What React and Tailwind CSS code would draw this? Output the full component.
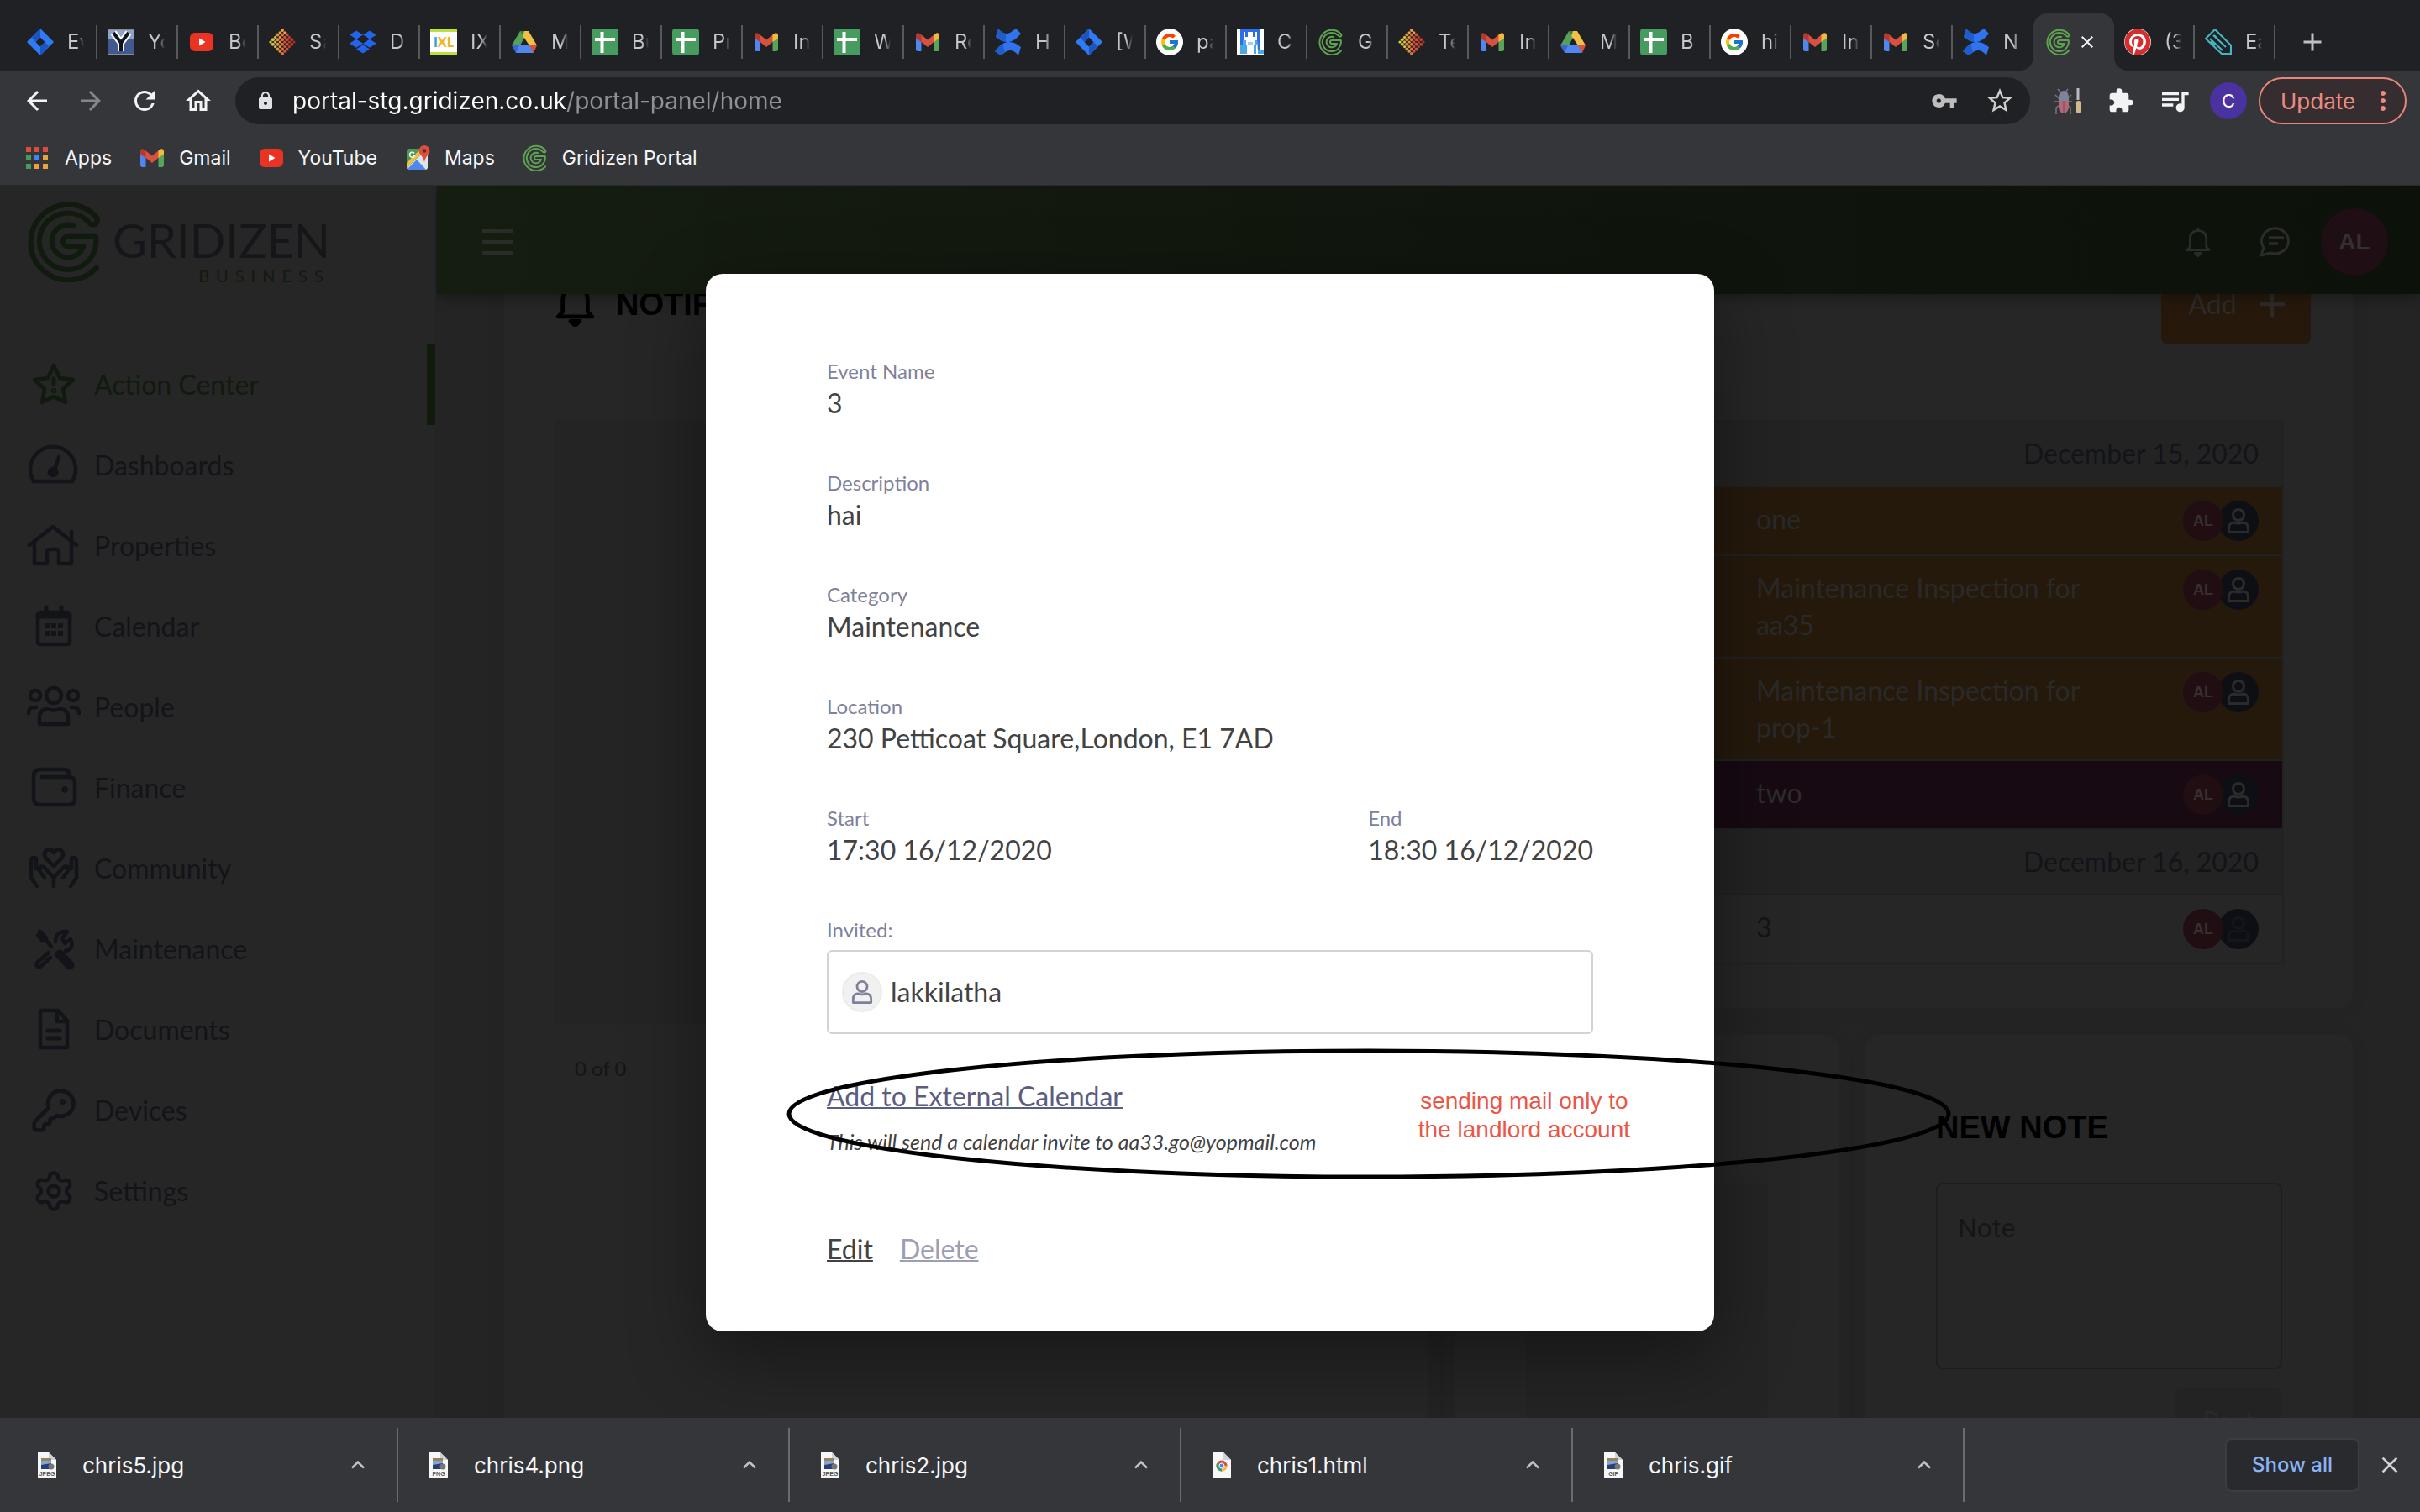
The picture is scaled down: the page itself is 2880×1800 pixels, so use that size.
import React from "react";
import {
  MdArrowBack, MdArrowForward, MdRefresh, MdOutlineHome, MdLock, MdVpnKey, MdStarBorder,
  MdExtension, MdQueueMusic, MdClose, MdAdd, MdMoreVert, MdKeyboardArrowUp,
} from "react-icons/md";
import { FaDropbox, FaPinterest } from "react-icons/fa";
import { FcGoogle } from "react-icons/fc";
import { FileText, KeyRound, Settings } from "lucide-react";

/* ---------- brand marks ---------- */

function GridizenMark({ className, width = 6 }) {
  return (
    <svg viewBox="0 0 90 96" className={className} fill="none" stroke="currentColor" strokeWidth={width} strokeLinecap="round" strokeLinejoin="round">
      <path d="M54 30A19 19 0 1 0 66 54H48a6 6 0 0 1 0-12H80A33 33 0 1 1 70 24Q76 32 81 27Q84 23 79 18A44 44 0 1 0 81 79" />
    </svg>
  );
}

function Jira() {
  return (
    <svg viewBox="0 0 32 32" className="size-8">
      <path fill="#2f7bf6" fillRule="evenodd" d="M16 0 32 16 16 32 0 16ZM16 10.5 10.5 16 16 21.500 21.500 16Z" />
      <path fill="#1d55c0" d="M16 0v10.500L10.500 16 6 11Z" />
      <path fill="#1d55c0" d="M16 32V21.500L21.500 16 26 21Z" />
    </svg>
  );
}

function Yammer() {
  return (
    <svg viewBox="0 0 32 32" className="size-8">
      <rect width="32" height="32" fill="#8a8a8a" />
      <rect y="2" width="32" height="28" fill="#41598f" />
      <rect y="2" width="32" height="10" fill="#8fa3c6" />
      <path d="M7 5 16 17V27M25 5 16 17" stroke="#fff" strokeWidth="8" fill="none" />
      <path d="M7 5 16 17V27M25 5 16 17" stroke="#10131f" strokeWidth="4" fill="none" />
    </svg>
  );
}

function YouTube() {
  return (
    <svg viewBox="0 0 32 32" className="size-8">
      <rect x="2" y="5" width="28" height="22" rx="6" fill="#ea3323" />
      <path d="M13 11.500 20.500 16 13 20.500Z" fill="#fff" />
    </svg>
  );
}

const dotColors = ["#d9d04a", "#d9c04a", "#e0963a", "#e2743a", "#d4503a", "#c23c2c", "#a52f26"];
const dots = [];
for (let r = 0; r < 6; r++) {
  for (let c = 0; c < 6; c++) {
    dots.push([r, c, dotColors[Math.round((c - r + 5) * 0.6)]]);
  }
}
function DotDiamond() {
  return (
    <svg viewBox="0 0 32 32" className="size-8">
      {dots.map(([r, c, f]) => (
        <circle key={r + "-" + c} cx={16 + (c - r) * 2.8} cy={2 + (c + r) * 2.8} r={(r + c) % 2 ? 1.6 : 2} fill={r + c < 2 ? "#f0a04a" : f} />
      ))}
    </svg>
  );
}

function Ixl() {
  return (
    <span className="flex size-8 flex-col justify-center border-y-4 border-[#b9e33c] bg-white text-center font-['Lato'] text-[16px] leading-6 font-black text-[#efb32b]">
      <span><span className="text-[#3aa0d8]">I</span>XL</span>
    </span>
  );
}

function Drive() {
  return (
    <svg viewBox="0 0 32 32" className="size-8">
      <path fill="#56a05a" d="M11 3h5l4 7L7 29 1 20Z" />
      <path fill="#3c7c40" d="M11 3h10l-5 8Z" />
      <path fill="#f2c042" d="M16 3h5l10 17H22L14 9Z" />
      <path fill="#4f87ee" d="M8 20h15l4 9H6Z" />
      <path fill="#3c66cf" d="M1 20h9l-4 9Z" />
      <path fill="#d8503f" d="M22 20h9l-4 9Z" />
      <path fill="#202124" d="m16 11 5 9H11Z" />
    </svg>
  );
}

function Sheets() {
  return (
    <svg viewBox="0 0 32 32" className="size-8">
      <rect width="32" height="32" rx="4" fill="#469b5f" />
      <path d="M12.500 4v25M4 13h24" stroke="#fff" strokeWidth="4" />
    </svg>
  );
}

function Gmail() {
  return (
    <svg viewBox="0 0 32 32" className="size-8">
      <path fill="#4f87ee" d="M2 9h6.500v18H4.500A2.500 2.500 0 0 1 2 24.500Z" />
      <path fill="#56a55a" d="M23.500 9H30v15.500A2.500 2.500 0 0 1 27.500 27h-4Z" />
      <path fill="#d8503f" d="m8 7 8 6.500L24 7v8.500L16 22l-8-6.500Z" />
      <path fill="#f2b93c" d="M23.500 7.500 26 5.700c2-1.200 4 .3 4 2.300v3.500l-6.500 4.500Z" />
      <path fill="#b8382b" d="M8.500 7.500 6 5.700C4 4.500 2 6 2 8v3.500l6.500 4.500Z" />
    </svg>
  );
}

function Confluence() {
  return (
    <svg viewBox="0 0 32 32" className="size-8">
      <path fill="#2f74ee" d="M4 0c5 6 9 7 14 5l7-5 6 6C24 14 20 16 15 16 9 16 5 13 1 10Z" />
      <path fill="#1f5ccc" d="M4 0c3 4 6 6 9 6v10C9 15 5 13 1 10Z" />
      <path fill="#2f74ee" d="M28 32c-5-6-9-7-14-5l-7 5-7-5C7 18 12 16 17 16c6 0 10 3 14 6Z" />
      <path fill="#1f5ccc" d="M7 32l-7-5c3-4 6-7 9-9l3 10Z" />
    </svg>
  );
}

function Google() {
  return (
    <span className="flex size-8 items-center justify-center rounded-full bg-white">
      <FcGoogle className="size-6" />
    </span>
  );
}

function PixelFigure() {
  return (
    <svg viewBox="0 0 32 32" className="size-8">
      <rect width="32" height="32" fill="#fff" />
      <path fill="#2c6ee8" d="M4 0h24v14h-4V4H8v10H4ZM4 14h3v14H4ZM24 14h4v12h-3Z" />
      <path fill="#4aa8e8" d="M7 14h4v6H7ZM21 14h3v6h-3ZM4 20h4v10H4ZM9 19h3v11H9ZM20 19h3v11h-3ZM25 26h7v4h-7Z" />
      <path fill="#2c6ee8" d="M10 4h3v6h-3ZM19 4h3v6h-3Z" />
      <path fill="#9fd0f2" d="M13 16h6v3h-6Z" />
    </svg>
  );
}

function Clip() {
  return (
    <svg viewBox="0 0 32 32" className="size-8" fill="none" stroke="#48b3bd" strokeWidth="2.200">
      <path d="M12 1 1 12l19 18h11V20L12 1M6 12l15 14M10 8l15 14M15 12l-4-4M12 20 7 15" />
    </svg>
  );
}

function MapsPin() {
  return (
    <svg viewBox="0 0 32 32" className="size-8">
      <rect x="3" y="5" width="25" height="25" rx="3" fill="#4d9a55" />
      <path d="M3 28 24 8l4 4v16l-2 2H5Z" fill="#dfe3e6" />
      <path d="M4 29 15 18l11 12H6Z" fill="#4f87ee" />
      <path d="M3 22 20 5h6L3 28Z" fill="#f2c042" />
      <path d="M24 1a6.500 6.500 0 0 0-6.500 6.500C17.500 12 23 14 24 21c1-7 6.500-9 6.500-13.500A6.500 6.500 0 0 0 24 1Z" fill="#d8503f" />
      <circle cx="24" cy="7.500" r="2.300" fill="#7f1f18" />
      <path d="M12 10.500a3 3 0 1 0 .5 2.500H10" stroke="#fff" strokeWidth="1.500" fill="none" />
    </svg>
  );
}

const appColors = ["#dd4b3e", "#dd4b3e", "#dd4b3e", "#469b5f", "#4285f4", "#e8a33d", "#469b5f", "#e8a33d", "#e8a33d"];
function AppsGrid() {
  return (
    <svg viewBox="0 0 26 26" className="size-[26px]">
      {appColors.map((c, i) => (
        <rect key={i} x={(i % 3) * 10} y={Math.floor(i / 3) * 10} width="6" height="6" fill={c} />
      ))}
    </svg>
  );
}

function Bug() {
  return (
    <svg viewBox="0 0 34 34" className="size-[34px]">
      <path d="M5 3l5 6M17 3l-5 6M2 10l5 5v4M21 10l-5 5v4M1 18h21M3 33V25l4-3M20 33V25l-4-3" stroke="#76787c" strokeWidth="1.500" fill="none" />
      <path d="M6 13a6 8 0 0 1 12 0v4H6Z" fill="#7d8499" />
      <path d="M6 17h12v6c0 6-3 9-6 9s-6-3-6-9Z" fill="#b3687a" />
      <path d="M12 17v15" stroke="#7b4452" />
      <path d="M29 2v14" stroke="#b8bcc2" strokeWidth="3" />
      <rect x="27" y="17" width="5" height="15" rx="2" fill="#cdb98c" />
    </svg>
  );
}

const Mark = () => <GridizenMark className="size-8 text-[#5fa352]" width={6} />;
const Dropbox = () => <FaDropbox className="size-8 text-[#2463eb]" />;
const Pinterest = () => (
  <span className="rounded-full bg-white"><FaPinterest className="size-8 text-[#d32f2f]" /></span>
);

/* ---------- browser frame ---------- */

const tabs = [
  [Jira, "Ev"], [Yammer, "Yo"], [YouTube, "Bo"], [DotDiamond, "Sa"], [Dropbox, "D"], [Ixl, "IX"], [Drive, "M"],
  [Sheets, "Bu"], [Sheets, "Pr"], [Gmail, "In"], [Sheets, "W"], [Gmail, "Re"], [Confluence, "H"], [Jira, "[W"],
  [Google, "pa"], [PixelFigure, "C"], [Mark, "G"], [DotDiamond, "Te"], [Gmail, "In"], [Drive, "M"], [Sheets, "B"],
  [Google, "hi"], [Gmail, "In"], [Gmail, "Sc"], [Confluence, "N"], null, [Pinterest, "(3"], [Clip, "Ea"],
];

function TabStrip() {
  return (
    <div className="flex h-[84px] items-end bg-[#202124] pl-5">
      {tabs.map((tab, i) =>
        tab === null ? (
          <div key={i} className="relative flex h-[68px] w-24 shrink-0 items-center rounded-t-2xl bg-[#35363a] pl-3.5">
            <svg viewBox="0 0 16 16" className="absolute bottom-0 -left-4 size-4"><path d="M16 0v16H0A16 16 0 0 0 16 0Z" fill="#35363a" /></svg>
            <svg viewBox="0 0 16 16" className="absolute -right-4 bottom-0 size-4"><path d="M0 0v16h16A16 16 0 0 1 0 0Z" fill="#35363a" /></svg>
            <Mark />
            <button aria-label="Close tab" className="ml-1.5 text-[#f1f3f4]"><MdClose className="size-6" /></button>
          </div>
        ) : (
          <button key={i} className="flex h-[68px] w-24 shrink-0 items-center text-left">
            <span className="flex w-[94px] items-center pl-3">
              {React.createElement(tab[0])}
              <span className="ml-4 w-5 overflow-hidden bg-[linear-gradient(90deg,#c4c7cb_60%,transparent_100%)] bg-clip-text text-[24px] leading-8 whitespace-nowrap text-transparent">{tab[1]}</span>
            </span>
            {tabs[i + 1] !== null && <span className="h-10 w-0.5 bg-[#56585c]" />}
          </button>
        )
      )}
      <button aria-label="New tab" className="flex h-[68px] w-20 items-center justify-center pl-2 text-[#bdc1c6]"><MdAdd className="size-9" /></button>
    </div>
  );
}

function Toolbar() {
  return (
    <div className="flex h-[72px] items-center bg-[#35363a] pr-4 pl-[26px]">
      <div className="flex gap-7 text-[#f1f3f4]">
        <button aria-label="Back"><MdArrowBack className="size-9" /></button>
        <button aria-label="Forward" className="text-[#85868a]"><MdArrowForward className="size-9" /></button>
        <button aria-label="Reload"><MdRefresh className="size-9" /></button>
        <button aria-label="Home"><MdOutlineHome className="size-9" /></button>
      </div>
      <div className="ml-[26px] flex h-14 min-w-0 flex-1 items-center rounded-full bg-[#202124] pr-[18px] pl-6">
        <MdLock className="size-6 text-[#dfe1e5]" />
        <input
          aria-label="Address"
          defaultValue="portal-stg.gridizen.co.uk/portal-panel/home"
          className="ml-5 min-w-0 flex-1 bg-[linear-gradient(90deg,#ffffff_326px,#8f9195_326px)] bg-clip-text text-[28px] leading-10 text-transparent outline-none"
        />
        <button aria-label="Passwords"><MdVpnKey className="size-8 text-[#bdbdbd]" /></button>
        <button aria-label="Bookmark" className="ml-8"><MdStarBorder className="size-9 text-[#cfcfcf]" /></button>
      </div>
      <button aria-label="Bug tool" className="ml-7"><Bug /></button>
      <button aria-label="Extensions" className="ml-[30px] text-[#f1f3f4]"><MdExtension className="size-8" /></button>
      <button aria-label="Media" className="ml-7 text-[#f1f3f4]"><MdQueueMusic className="size-10" /></button>
      <button className="ml-[22px] size-11 rounded-full bg-[#4a32a0] text-[22px] text-white">C</button>
      <button className="ml-3.5 flex h-14 w-44 items-center justify-between rounded-full border-2 border-[#e8867c] bg-[#352d2f] pr-2 pl-6 text-[26px] text-[#ec8b80]">
        Update <MdMoreVert className="size-9" />
      </button>
    </div>
  );
}

const bookmarks = [["Apps", AppsGrid, "gap-5"], ["Gmail", Gmail, "gap-4"], ["YouTube", YouTube, "gap-4"], ["Maps", MapsPin, "gap-4"], ["Gridizen Portal", Mark, "gap-4"]];

function Bookmarks() {
  return (
    <div className="flex h-[66px] items-center gap-8 border-b-2 border-[#2a2a2b] bg-[#35363a] pl-[31px] text-[23px] text-[#f5f6f7]">
      {bookmarks.map(([label, Icon, gap]) => (
        <a key={label} href={"#" + label} className={"flex items-center " + gap}><Icon />{label}</a>
      ))}
    </div>
  );
}

/* ---------- portal ---------- */

const NavIcon = ({ children }) => (
  <svg viewBox="0 0 64 64" className="size-16" fill="none" stroke="currentColor" strokeWidth="4.500" strokeLinecap="round" strokeLinejoin="round">{children}</svg>
);

const nav = [
  ["Action Center", <NavIcon key="i"><path d="m32 9 7 15 16 2-12 11 3 16-14-7-14 7 3-16L9 26l16-2Z" /><path d="M32 25v6" strokeWidth="5" /><circle cx="32" cy="39" r="1" /></NavIcon>],
  ["Dashboards", <NavIcon key="i"><path d="M8 51A27 27 0 1 1 54 51Z" /><path d="m38 22-6 18" /><circle cx="31" cy="40" r="4" fill="currentColor" /><path d="M28 41h6" strokeWidth="7" /></NavIcon>],
  ["Properties", <NavIcon key="i"><path d="M3 31 31 9l28 22M9 28v25h15V39q0-3 3-3h8q3 0 3 3v14h15V28M53 15v9" /></NavIcon>],
  ["Calendar", <NavIcon key="i"><rect x="13" y="15" width="38" height="38" rx="3" /><path d="M14 19h36" strokeWidth="7" /><path d="M23 9v6M41 9v6" strokeWidth="5" /><path d="M24 31h0M32 31h0M40 31h0M24 40h0M32 40h0M40 40h0" strokeWidth="6" strokeLinecap="square" /></NavIcon>],
  ["People", <NavIcon key="i"><circle cx="32" cy="18" r="9" /><circle cx="10" cy="18" r="6" /><circle cx="55" cy="18" r="6" /><path d="M15 52V44q0-9 9-10 8 3 16 0 9 1 9 10v8ZM2 39q0-8 9-7M62 39q0-8-9-7" /></NavIcon>],
  ["Finance", <NavIcon key="i"><path d="M50 19v-4q0-5-6-5H16q-8 0-8 8v26q0 8 8 8h34q7 0 7-7V26q0-7-7-7H18" /><circle cx="45" cy="34" r="1.500" /></NavIcon>],
  ["Community", <NavIcon key="i"><path d="M32 29 22 19q-3-6 2-9 5-2 8 3 3-5 8-3 5 3 2 9ZM12 53 5 43V23q1-6 6-3v12M52 53l7-10V23q-1-6-6-3v12M32 53V43L20 30q-5-2-6 3l7 10M32 43l12-13q5-2 6 3l-7 10" /></NavIcon>],
  ["Maintenance", <NavIcon key="i"><path d="M15 11 29 29M36 39l16 14" /><path d="m14 12 8 10" strokeWidth="10" strokeLinecap="butt" /><path d="m39 38 12 13" strokeWidth="11" /><path d="M26 36 12 48q-2 6 4 5l12-11M34 23q0-13 14-12l-6 8 3 6 7-5q5 11-6 14" /></NavIcon>],
  ["Documents", <NavIcon key="i"><path d="M17 9h20l11 12v32H17q-1 0-1-1V10q0-1 1-1ZM36 10v12h11" /><path d="M25 33h14M25 42h14" strokeWidth="5" /></NavIcon>],
  ["Devices", <KeyRound key="i" className="size-16 p-1" strokeWidth={2} />],
  ["Settings", <Settings key="i" className="size-16 p-1.5" strokeWidth={2} />],
];

function Sidebar() {
  return (
    <aside className="w-[518px] shrink-0 bg-[#262626] text-[#131419]">
      <div className="flex h-[188px] items-start pt-4 pl-8">
        <GridizenMark className="h-[98px] w-[92px] text-[#101b0e]" />
        <div className="flex flex-col items-end pl-2.5">
          <div className="mt-5 text-[56px] leading-[56px] font-normal text-[#14161a]">GRIDIZEN</div>
          <div className="text-[20px] leading-7 tracking-[8px] text-[#111b0f]">BUSINESS</div>
        </div>
      </div>
      <nav>
        {nav.map(([label, icon], i) => (
          <a key={label} href={"#" + label} className={i === 0 ? "flex h-24 items-center gap-4 border-r-[10px] border-[#101b0e] pl-8 text-[#101b0e]" : "flex h-24 items-center gap-4 pl-8"}>
            {icon}{label}
          </a>
        ))}
      </nav>
    </aside>
  );
}

const Person = ({ className }) => (
  <svg viewBox="0 0 28 32" className={className} fill="none" stroke="currentColor" strokeWidth="3">
    <circle cx="14" cy="9" r="6.500" />
    <path d="M2.500 29.500V25q0-6.500 6-7 5.500 2 11 0 6 .5 6 7v4.500Z" strokeLinejoin="round" />
  </svg>
);

const BellIcon = ({ className, width }) => (
  <svg viewBox="0 0 36 40" className={className} fill="none" stroke="currentColor" strokeWidth={width} strokeLinejoin="round">
    <path d="M18 2v3M7 27V17Q7 5 18 5t11 12v10l4 4H3Z" strokeLinecap="round" />
    <path d="M14 35h8l-4 4Z" fill="currentColor" />
  </svg>
);

const condensed = "font-['Liberation_Sans_Narrow','Liberation_Sans',sans-serif] font-bold";

function Header() {
  return (
    <header className="relative z-10 ml-0.5 flex h-32 items-center bg-linear-to-r from-[#151c10] to-[#0c110a] pt-1 pr-[38px] pl-[54px] text-[#2a2c2a] shadow-[0_4px_16px_rgba(0,0,0,0.35)]">
      <button aria-label="Menu" className="flex w-9 flex-col gap-[9px]">
        <span className="h-1 bg-current" /><span className="h-1 bg-current" /><span className="h-1 bg-current" />
      </button>
      <button aria-label="Notifications" className="ml-auto"><BellIcon className="h-9 w-8" width={3} /></button>
      <button aria-label="Messages" className="ml-14">
        <svg viewBox="0 0 40 36" className="h-9 w-10" fill="none" stroke="currentColor" strokeWidth="3" strokeLinejoin="round">
          <path d="M6 25A16 15 0 1 1 14 31L3 34Z" /><path d="M12 13h18M12 20h11" strokeWidth="3.500" />
        </svg>
      </button>
      <button className={"ml-[34px] size-20 rounded-full bg-[#1f0e13] text-[28px] text-[#33302f] " + condensed}>AL</button>
    </header>
  );
}

const rowTones = {
  orange: "bg-[#25190c] text-[#292929]",
  purple: "bg-[#170a13] text-[#2c2c2c]",
  plain: "bg-[#262626] text-[#131419]",
};

function EventRow({ tone, children }) {
  return (
    <li className={"flex items-start border-b-2 border-[#202122] py-4 pr-7 pl-[296px] leading-11 " + rowTones[tone]}>
      <span className="w-[430px]">{children}</span>
      <span className="ml-auto flex">
        <span className={"z-1 flex size-12 items-center justify-center rounded-full bg-[#200e13] text-[18px] text-[#38302f] " + condensed}>AL</span>
        <span className="-ml-1.5 flex size-12 items-center justify-center rounded-full bg-[#0e0f15]">
          <Person className={tone === "plain" ? "h-8 w-7 text-[#14151d]" : "h-8 w-7 text-[#2b2b2b]"} />
        </span>
      </span>
    </li>
  );
}

const DateRow = ({ children }) => (
  <li className="border-b-2 border-[#202020] bg-[#232323] pr-7 text-right leading-[76px] text-[#131419]">{children}</li>
);

const card = "rounded-2xl bg-[#262626] shadow-[0_0_24px_rgba(0,0,0,0.06)]";

function Board() {
  return (
    <main className="-mt-20 grid grid-cols-[1100fr_1068fr] gap-8 pr-20 pl-[82px]">
      <section className={card + " h-[1500px] px-15 pt-11"}>
        <div className="flex h-24 items-center gap-6 text-black">
          <BellIcon className="h-[54px] w-[49px]" width={3.5} />
          <h2 className={"text-[38px] leading-[44px] " + condensed}>NOTIFICATIONS</h2>
        </div>
        <div className="mt-[90px] h-[720px] bg-[#242424]" />
        <p className="mt-9 pl-6 text-[24px] leading-8 text-[#151515]">0 of 0</p>
      </section>
      <div className="flex flex-col gap-8">
        <section className={card + " pt-11 pb-[52px]"}>
          <div className="flex h-24 justify-end pr-[50px]">
            <button className="flex h-24 w-[178px] items-center justify-center gap-4 rounded-lg bg-[#26190c] pl-3 text-[#2c2b2a]">
              Add <MdAdd className="size-13" />
            </button>
          </div>
          <ul className="mt-[90px] mr-[82px] ml-15 border-2 border-b-0 border-[#222222]">
            <DateRow>December 15, 2020</DateRow>
            <EventRow tone="orange">one</EventRow>
            <EventRow tone="orange">Maintenance Inspection for aa35</EventRow>
            <EventRow tone="orange">Maintenance Inspection for prop-1</EventRow>
            <EventRow tone="purple">two</EventRow>
            <DateRow>December 16, 2020</DateRow>
            <EventRow tone="plain">3</EventRow>
          </ul>
        </section>
        <div className="grid grid-cols-[456fr_580fr] gap-8">
          <section className={card + " h-[540px] px-21 pt-44"}>
            <div className="h-full bg-[#242424]" />
          </section>
          <section className={card + " px-[84px] pt-[84px]"}>
            <h2 className={"text-[38px] leading-[52px] text-black " + condensed}>NEW NOTE</h2>
            <textarea aria-label="Note" placeholder="Note" className="mt-10 block h-[222px] w-full resize-none rounded-lg border-2 border-[#1e1e1e] bg-transparent px-6 py-8 font-['Roboto'] leading-10 outline-none placeholder:text-[#161616]" />
            <button className="mt-[22px] ml-auto block h-20 w-32 rounded-lg bg-[#232323] text-[#2a2a2a]">Post</button>
          </section>
        </div>
      </div>
    </main>
  );
}

const Field = ({ label, children }) => (
  <div className="mb-[57px]">
    <dt className="text-[24px] leading-9 text-[#7f819c]">{label}</dt>
    <dd className="leading-10">{children}</dd>
  </div>
);

function EventDialog() {
  return (
    <div className="absolute inset-0 z-20 flex items-center justify-center">
      <div role="dialog" aria-label="Event details" className="relative w-[1200px] rounded-[20px] bg-white px-36 pt-[98px] pb-[78px] text-[#424242] shadow-[0_30px_90px_rgba(0,0,0,0.4)]">
        <dl>
          <Field label="Event Name">3</Field>
          <Field label="Description">hai</Field>
          <Field label="Category">Maintenance</Field>
          <Field label="Location">230 Petticoat Square,London, E1 7AD</Field>
          <div className="flex justify-between">
            <Field label="Start">17:30 16/12/2020</Field>
            <Field label="End">18:30 16/12/2020</Field>
          </div>
        </dl>
        <p className="text-[24px] leading-9 text-[#7f819c]">Invited:</p>
        <div className="mt-1.5 flex h-[100px] items-center gap-2.5 rounded-md border-2 border-[#d3d3d3] px-4">
          <span className="flex size-12 items-center justify-center rounded-full border-2 border-[#ebebeb] bg-[#f1f1f1]">
            <Person className="h-[30px] w-[26px] text-[#7f819c]" />
          </span>
          lakkilatha
        </div>
        <a href="#calendar" className="mt-[54px] block w-fit leading-10 text-[#5b5d7e] underline decoration-2">Add to External Calendar</a>
        <p className="mt-4 text-[25px] leading-9 italic">This will send a calendar invite to aa33.go@yopmail.com</p>
        <div className="mt-[90px] flex gap-8 leading-10">
          <button className="underline decoration-2">Edit</button>
          <button className="text-[#9c9eb6] underline decoration-2">Delete</button>
        </div>
        <p className="absolute top-[968px] right-[100px] text-center font-['Liberation_Sans'] text-[28px] leading-[34px] text-[#ec5545]">sending mail only to<br />the landlord account</p>
        <svg viewBox="0 0 1388 158" className="absolute top-[921px] left-24 h-[158px] w-[1388px]" fill="none" stroke="#000" strokeWidth="5">
          <ellipse cx="693" cy="79" rx="690" ry="75" />
        </svg>
      </div>
    </div>
  );
}

/* ---------- downloads ---------- */

function FileIcon({ kind }) {
  return (
    <svg viewBox="0 0 22 30" className="h-[30px] w-[22px]">
      <path d="M0 0h13l9 9v21H0Z" fill="#f7f7f7" />
      <path d="M13 0v9h9Z" fill="#cfd2d6" />
      {kind === "HTML" ? (
        <g>
          <circle cx="11" cy="16" r="6.500" fill="#d8503f" />
          <path d="M11 16 5.400 12.700A6.500 6.500 0 0 0 11 22.500Z" fill="#469b5f" />
          <path d="M11 16h6.500a6.500 6.500 0 0 1-6.500 6.500Z" fill="#f2c042" />
          <circle cx="11" cy="16" r="3" fill="#4285f4" stroke="#fff" />
        </g>
      ) : (
        <g>
          <rect x="4" y="7" width="12" height="13" fill="#7fa5dc" />
          <path d="M4 7h12v3H4Z" fill="#a08055" />
          <path d="M4 15l12-2v7H4Z" fill="#26406f" />
          <circle cx="16" cy="17" r="3.500" fill="#777" />
          <text x="11" y="28" textAnchor="middle" fontSize="7" fontFamily="Liberation Sans" fontWeight="bold" fill="#555">{kind}</text>
        </g>
      )}
    </svg>
  );
}

const files = [["chris5.jpg", "JPEG"], ["chris4.png", "PNG"], ["chris2.jpg", "JPEG"], ["chris1.html", "HTML"], ["chris.gif", "GIF"]];

function Downloads() {
  return (
    <footer className="flex h-28 items-center bg-[#35363a] pr-5 pl-2 text-[26px] text-[#f5f6f7]">
      {files.map(([name, kind]) => (
        <div key={name} className="flex h-22 w-[466px] items-center border-r-2 border-[#6a6b6f] pr-[30px] pl-[37px]">
          <FileIcon kind={kind} />
          <span className="ml-[31px]">{name}</span>
          <button aria-label={"Options for " + name} className="ml-auto text-[#c0c1c4]"><MdKeyboardArrowUp className="size-8" /></button>
        </div>
      ))}
      <button className="mr-5 ml-auto h-16 w-40 rounded-lg border-2 border-[#3c3d41] bg-[#292a2d] text-[24px] font-medium text-[#8ab4f8]">Show all</button>
      <button aria-label="Close downloads" className="text-[#d0d1d4]"><MdClose className="size-8" /></button>
    </footer>
  );
}

export default function App() {
  return (
    <div className="flex h-screen flex-col overflow-hidden font-['Inter',sans-serif]">
      <TabStrip />
      <Toolbar />
      <Bookmarks />
      <div className="relative min-h-0 flex-1 overflow-hidden bg-[#242424] font-['Lato',sans-serif] text-[32px]">
        <div className="flex h-full">
          <Sidebar />
          <div className="min-w-0 flex-1 overflow-hidden">
            <Header />
            <Board />
          </div>
        </div>
        <EventDialog />
      </div>
      <Downloads />
    </div>
  );
}
